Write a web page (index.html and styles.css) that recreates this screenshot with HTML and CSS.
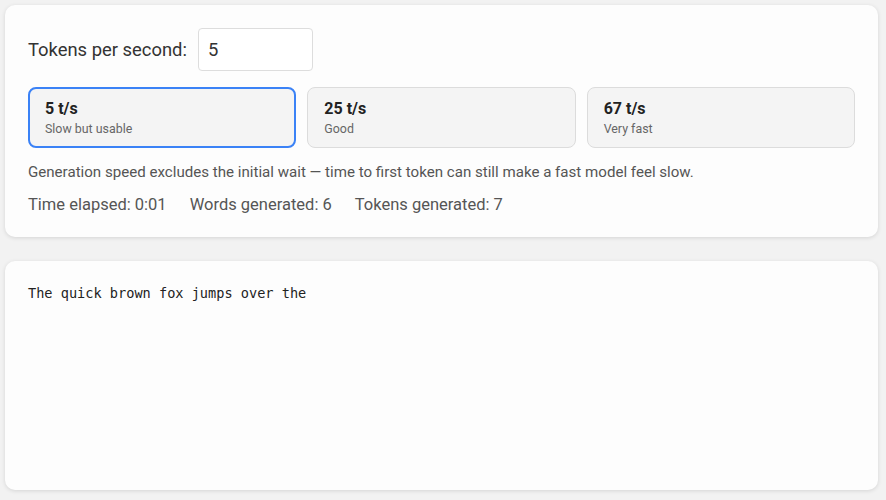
FILE: index.html
```html
<!DOCTYPE html>
<html lang="en">
<head>
<meta charset="utf-8">
<title>Token speed demo</title>
<link rel="stylesheet" href="styles.css">
</head>
<body>
  <section class="card controls">
    <div class="rate-row">
      <label class="rate-label" for="rate">Tokens per second:</label>
      <input id="rate" class="rate-input" type="text" value="5">
    </div>
    <div class="presets">
      <button class="preset active"><span class="preset-title">5 t/s</span><span class="preset-sub">Slow but usable</span></button>
      <button class="preset"><span class="preset-title">25 t/s</span><span class="preset-sub">Good</span></button>
      <button class="preset"><span class="preset-title">67 t/s</span><span class="preset-sub">Very fast</span></button>
    </div>
    <p class="note">Generation speed excludes the initial wait — time to first token can still make a fast model feel slow.</p>
    <div class="stats">
      <span>Time elapsed: 0:01</span>
      <span>Words generated: 6</span>
      <span>Tokens generated: 7</span>
    </div>
  </section>
  <section class="card output">
    <pre class="stream">The quick brown fox jumps over the</pre>
  </section>
</body>
</html>
```
FILE: styles.css
```css
html, body {
  margin: 0;
  background: #f2f2f2;
}
body {
  padding: 5px 8px 10px 5px;
  font-family: Roboto, "Liberation Sans", sans-serif;
  color: #333;
  display: flex;
  flex-direction: column;
  gap: 24px;
}
.card {
  background: #fdfdfd;
  border-radius: 10px;
  box-shadow: 0 1px 4px rgba(0, 0, 0, 0.12);
}
.controls {
  padding: 23px 23px 22px;
}
.rate-row {
  display: flex;
  align-items: center;
  gap: 11px;
}
.rate-label {
  font-size: 18.4px;
  color: #333;
}
.rate-input {
  width: 115px;
  height: 43px;
  box-sizing: border-box;
  border: 1px solid #ddd;
  border-radius: 4px;
  padding: 0 9px;
  font: 18.4px Roboto, "Liberation Sans", sans-serif;
  color: #333;
  background: #fff;
}
.presets {
  display: grid;
  grid-template-columns: repeat(3, 1fr);
  gap: 11px;
  margin-top: 16px;
}
.preset {
  display: flex;
  flex-direction: column;
  align-items: flex-start;
  height: 61px;
  box-sizing: border-box;
  padding: 11px 16px 0;
  background: #f4f4f4;
  border: 1px solid #dcdcdc;
  border-radius: 8px;
  font-family: Roboto, "Liberation Sans", sans-serif;
  text-align: left;
}
.preset.active {
  border: 2px solid #3b82f6;
  padding: 10px 15px 0;
}
.preset-title {
  font-size: 16px;
  font-weight: 700;
  color: #222;
  line-height: 20px;
}
.preset-sub {
  font-size: 12.4px;
  color: #666;
  line-height: 15px;
  margin-top: 2px;
}
.note {
  margin: 14px 0 0;
  font-size: 15.1px;
  line-height: 20px;
  color: #555;
}
.stats {
  display: flex;
  gap: 23px;
  margin-top: 13px;
  font-size: 16.5px;
  line-height: 20px;
  color: #555;
}
.output {
  height: 229px;
  box-sizing: border-box;
  padding: 23px;
}
.stream {
  margin: 0;
  font-family: "DejaVu Sans Mono", monospace;
  font-size: 13.6px;
  line-height: 18px;
  color: #222;
}
```
